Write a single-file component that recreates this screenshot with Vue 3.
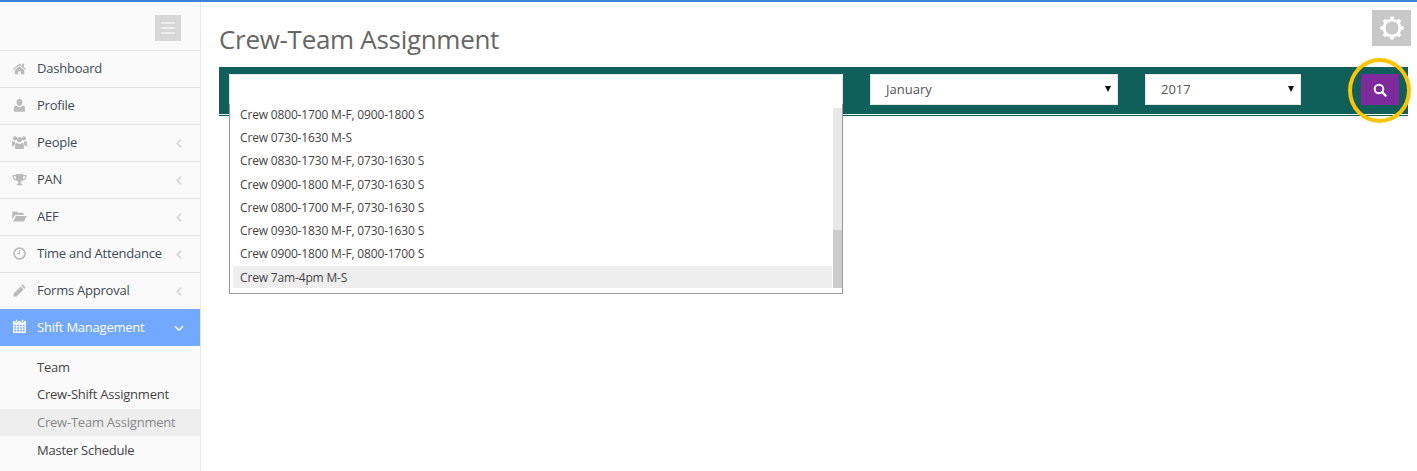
<script setup>
const menu = [
  { label: 'Dashboard', icon: 'home' },
  { label: 'Profile', icon: 'user' },
  { label: 'People', icon: 'group', arrow: true },
  { label: 'PAN', icon: 'trophy', arrow: true },
  { label: 'AEF', icon: 'folder', arrow: true },
  { label: 'Time and Attendance', icon: 'clock', arrow: true },
  { label: 'Forms Approval', icon: 'pencil', arrow: true }
]
const sub = [
  { label: 'Team' },
  { label: 'Crew-Shift Assignment' },
  { label: 'Crew-Team Assignment', active: true },
  { label: 'Master Schedule' }
]
const crews = [
  'Crew 0800-1700 M-F, 0900-1800 S',
  'Crew 0730-1630 M-S',
  'Crew 0830-1730 M-F, 0730-1630 S',
  'Crew 0900-1800 M-F, 0730-1630 S',
  'Crew 0800-1700 M-F, 0730-1630 S',
  'Crew 0930-1830 M-F, 0730-1630 S',
  'Crew 0900-1800 M-F, 0800-1700 S',
  'Crew 7am-4pm M-S'
]
</script>

<template>
  <div class="page">
    <aside class="sidebar">
      <div class="side-top">
        <button class="toggle" aria-label="Toggle menu"><span></span><span></span><span></span></button>
      </div>
      <ul class="menu">
        <li v-for="m in menu" :key="m.label" class="item">
          <svg class="ico" viewBox="0 0 16 16">
            <template v-if="m.icon === 'home'">
              <path d="M8 2.6 1 8.4l.8 1L8 4.3l6.2 5.1.8-1-2.4-2V3h-2v1.7z"/>
              <path d="M3 9.6 8 5.5l5 4.1V14H9.400v-3H6.600v3H3z"/>
            </template>
            <path v-else-if="m.icon === 'user'" d="M8 1c1.900 0 3.200 1.600 3.200 3.600S9.900 8.400 8 8.400 4.800 6.600 4.800 4.600 6.100 1 8 1zM4.400 8C5.300 9 6.500 9.500 8 9.500s2.700-.5 3.600-1.500c1.500.2 2.400 1.600 2.400 3.700v1.500c0 .9-.7 1.500-1.500 1.500h-9c-.8 0-1.500-.6-1.500-1.500v-1.500c0-2.100.9-3.500 2.400-3.700z"/>
            <template v-else-if="m.icon === 'group'">
              <circle cx="3.200" cy="3.600" r="2.200"/><circle cx="12.800" cy="3.600" r="2.200"/><circle cx="8" cy="4.800" r="2.800"/>
              <path d="M0 6.800h3.300c-.3.900 0 1.900.7 2.500-1.100.4-1.700 1.400-1.900 2.600H0zM16 6.800h-3.300c.3.900 0 1.900-.7 2.500 1.100.4 1.700 1.400 1.900 2.600H16z"/>
              <path d="M5.200 8.500c.7.600 1.700 1 2.800 1s2.100-.4 2.800-1c1.100.3 1.900 1.400 1.900 3V14c0 .6-.5 1-1 1H4.300c-.5 0-1-.4-1-1v-2.500c0-1.600.8-2.700 1.900-3z"/>
            </template>
            <path v-else-if="m.icon === 'trophy'" fill-rule="evenodd" d="M4 2h8v1.200h3.500v1.600c0 2.200-1.800 3.900-4.200 4.200-.5.700-1.200 1.200-2.100 1.400v1.900h1.600V14H5.200v-1.700h1.600v-1.900C5.900 10.200 5.200 9.700 4.700 9 2.300 8.700.5 7 .5 4.800V3.200H4zM1.800 4.400v.4c0 1.300 1 2.400 2.500 2.800C4.100 6.800 4 5.700 4 4.400zm12.400 0H12c0 1.300-.1 2.400-.3 3.200 1.500-.4 2.500-1.500 2.500-2.800z"/>
            <path v-else-if="m.icon === 'folder'" d="M.3 3.800C.3 3.100.8 2.600 1.500 2.600h3.700l1.200 1.500h4.900c.7 0 1.200.5 1.200 1.200v1H4.200c-.6 0-1.100.3-1.400.8L.3 11zM4.200 7.500h11.500l-2.900 5.700H1.200z"/>
            <path v-else-if="m.icon === 'clock'" fill-rule="evenodd" d="M8 1.300a6.700 6.700 0 1 1 0 13.400A6.700 6.700 0 0 1 8 1.300zm0 1.800a4.900 4.900 0 1 0 0 9.800 4.900 4.900 0 0 0 0-9.800zM7.400 4.600h1.200v3.900H5.400V7.400h2z"/>
            <path v-else-if="m.icon === 'pencil'" d="M11.400 1.400 14.600 4.600 13.200 6 10 2.800zM9.200 3.600l3.200 3.200-7.300 7.300-3.200.5-.4-.4.500-3.300z"/>
          </svg>
          <span class="label">{{ m.label }}</span>
          <svg v-if="m.arrow" class="chev" viewBox="0 0 6 9"><path d="M5 .8 1.200 4.500 5 8.200" fill="none" stroke="currentColor" stroke-width="1.200"/></svg>
        </li>
        <li class="item active">
          <svg class="ico" viewBox="0 0 16 16">
            <path fill-rule="evenodd" d="M4 .8h1.500v2H4zM10.500.8H12v2h-1.500zM1.200 2.200h1.900v1.500h3.200V2.200h3.400v1.500h3.200V2.200h1.900v12.600H1.200zM2.500 6v1.700h2V6zm3 0v1.700h2.100V6zm3 0v1.700h2V6zm3 0v1.700h2V6zm-9 2.700v1.700h2V8.700zm3 0v1.700h2.100V8.700zm3 0v1.700h2V8.700zm3 0v1.700h2V8.700zm-9 2.700v2h2v-2zm3 0v2h2.100v-2zm3 0v2h2v-2zm3 0v2h2v-2z"/>
          </svg>
          <span class="label">Shift Management</span>
          <svg class="chev down" viewBox="0 0 10 7"><path d="M1 1.300 5 5.200l4-3.900" fill="none" stroke="currentColor" stroke-width="1.400"/></svg>
        </li>
      </ul>
      <ul class="submenu">
        <li v-for="s in sub" :key="s.label" :class="['sub', { on: s.active }]">{{ s.label }}</li>
      </ul>
    </aside>

    <main class="main">
      <header class="head">
        <h1>Crew-Team Assignment</h1>
        <button class="gear" aria-label="Settings">
          <svg viewBox="0 0 24 24" width="24" height="24">
            <g fill="#fff">
              <rect v-for="a in [0,45,90,135,180,225,270,315]" :key="a" x="10.200" y="0.500" width="3.600" height="4" :transform="`rotate(${a} 12 12)`"/>
            </g>
            <circle cx="12" cy="12" r="8" fill="none" stroke="#fff" stroke-width="2.800"/>
          </svg>
        </button>
      </header>

      <section class="bar">
        <div class="crew">
          <div class="crew-input"></div>
          <div class="dropdown">
            <ul class="options">
              <li v-for="(c, i) in crews" :key="c" :class="{ hl: i === crews.length - 1 }">{{ c }}</li>
            </ul>
            <div class="scroll"><div class="thumb"></div></div>
          </div>
        </div>
        <div class="select month"><span>January</span><i></i></div>
        <div class="select year"><span>2017</span><i></i></div>
        <div class="search-wrap">
          <button class="search" aria-label="Search">
            <svg viewBox="0 0 14 14" width="14" height="14">
              <circle cx="6" cy="6" r="4.300" fill="none" stroke="#fff" stroke-width="2"/>
              <path d="M9.200 9.200 12.600 12.600" stroke="#fff" stroke-width="2.200" stroke-linecap="round"/>
            </svg>
          </button>
          <span class="ring"></span>
        </div>
      </section>
    </main>
  </div>
</template>

<style scoped>
.page {
  display: flex;
  height: 471px;
  overflow: hidden;
  border-top: 2px solid #3b7fdd;
  box-sizing: border-box;
  font-family: "Open Sans", sans-serif;
  font-size: 13px;
  color: #444;
  background: #fff;
}
ul { list-style: none; margin: 0; padding: 0; }
button { border: 0; padding: 0; cursor: pointer; }

.sidebar {
  width: 201px;
  flex: none;
  box-sizing: border-box;
  background: #fafafa;
  border-right: 1px solid #e8e8e8;
  letter-spacing: -0.23px;
}
.side-top {
  height: 48px;
  box-sizing: border-box;
  padding: 13px 19px 0 0;
  display: flex;
  justify-content: flex-end;
}
.toggle {
  width: 26px;
  height: 26px;
  background: #d8d8d8;
  display: flex;
  flex-direction: column;
  align-items: center;
  justify-content: center;
  gap: 3px;
}
.toggle span { width: 14px; height: 2px; background: #eee; }

.item {
  height: 37px;
  box-sizing: border-box;
  border-top: 1px solid #e3e3e3;
  display: flex;
  align-items: center;
  padding: 0 18px 2px 12px;
  position: relative;
}
.ico { width: 15px; height: 15px; fill: #bbb; flex: none; }
.label { margin-left: 10px; color: #3f4a55; }
.chev { margin-left: auto; margin-top: 3px; width: 6px; height: 9px; color: #ccc; }
.chev.down { width: 10px; height: 7px; color: #fff; margin-right: -2px; margin-top: 4px; }
.item.active { background: #72a8ff; border-top: 0; }
.item.active .ico { fill: #fff; }
.item.active .label { color: #fff; }

.submenu { padding-top: 8px; }
.sub {
  height: 27px;
  line-height: 27px;
  padding-left: 37px;
  color: #444;
}
.sub:nth-child(n+2) { margin-bottom: 1px; }
.sub.on { background: #eee; color: #888; }

.main { flex: 1; min-width: 0; padding: 8px 6px 0 18px; }
.head { display: flex; justify-content: space-between; align-items: flex-start; height: 57px; }
h1 {
  margin: 11px 0 0;
  font-size: 26px;
  line-height: 36px;
  font-weight: 400;
  color: #666;
  letter-spacing: -0.3px;
}
.gear {
  width: 39px;
  height: 36px;
  background: #c8c8c8;
  display: flex;
  align-items: center;
  justify-content: center;
}

.bar {
  height: 49px;
  margin-right: 3px;
  box-sizing: border-box;
  background: #0f5f5a;
  border-bottom: 1px solid #0f5f5a;
  box-shadow: inset 0 -1px 0 #fff;
  padding: 7px 9px 0 10px;
  display: flex;
  align-items: flex-start;
}
.crew { width: 614px; position: relative; }
.crew-input {
  height: 30px;
  box-sizing: border-box;
  background: #fff;
  border: 1px solid #e5e5e5;
  border-bottom: 0;
}
.dropdown {
  position: absolute;
  left: 0;
  right: 0;
  top: 30px;
  height: 190px;
  box-sizing: border-box;
  background: #fff;
  border: 1px solid #999;
  border-top: 0;
  padding: 0 0 5px 3px;
  display: flex;
  justify-content: space-between;
  z-index: 2;
}
.options { width: 599px; margin-top: -1px; color: #444; font-size: 12px; letter-spacing: -0.16px; }
.options li {
  height: 23.200px;
  line-height: 23.200px;
  padding-left: 7px;
  white-space: nowrap;
}
.options li.hl { height: 22px; line-height: 23px; margin-top: 1px; background: #eee; }
.scroll { width: 9px; margin-top: 4px; background: #e8e8e8; display: flex; align-items: flex-end; }
.thumb { width: 100%; height: 58px; background: #ccc; }

.select {
  height: 31px;
  box-sizing: border-box;
  background: #fff;
  border: 1px solid #e5e5e5;
  display: flex;
  align-items: center;
  justify-content: space-between;
  padding: 0 6px 2px 15px;
  color: #555;
}
.select i {
  width: 0;
  height: 0;
  border-left: 3.500px solid transparent;
  border-right: 3.500px solid transparent;
  border-top: 6px solid #111;
}
.month { width: 248px; margin-left: 27px; }
.year { width: 156px; margin-left: 27px; }

.search-wrap { position: relative; margin-left: 60px; }
.search {
  width: 38px;
  height: 31px;
  background: #7d2a9c;
  display: flex;
  align-items: center;
  justify-content: center;
}
.ring {
  position: absolute;
  left: -13px;
  top: -16px;
  width: 63px;
  height: 65px;
  box-sizing: border-box;
  border: 4px solid #ffc400;
  border-radius: 50%;
  pointer-events: none;
}
</style>
